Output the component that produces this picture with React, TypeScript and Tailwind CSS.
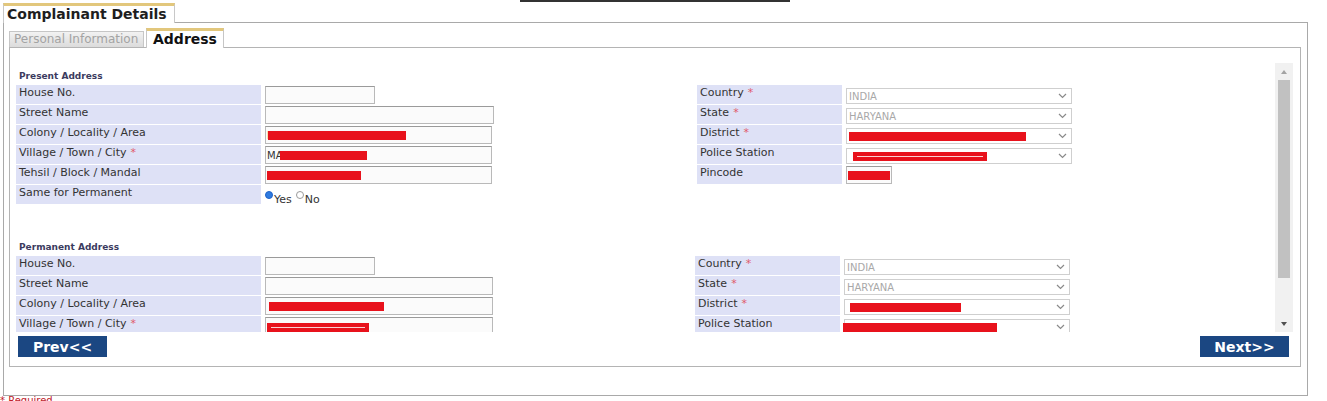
import type { ReactNode } from "react";

const font = "font-['DejaVu_Sans',sans-serif]";

function Req() {
  return <span className="ml-[4px] text-[#e05a6a]">*</span>;
}

function Redact({ w, ml = 0, line = false }: { w: number; ml?: number; line?: boolean }) {
  return (
    <div
      className="relative h-[9px] bg-[#e8121c]"
      style={{ width: w, marginLeft: ml }}
    >
      {line ? <div className="absolute left-[4px] right-[4px] top-[4px] h-px bg-white/80" /> : null}
    </div>
  );
}

function TextBox({ w, children }: { w: number; children?: ReactNode }) {
  return (
    <div
      className="flex h-[18px] items-center overflow-hidden border border-[#b9b9b9] border-t-[#9a9a9a] bg-[#fbfbfb] pl-[1px] text-[10px] text-[#333]"
      style={{ width: w }}
    >
      {children}
    </div>
  );
}

function Select({ value, children }: { value?: string; children?: ReactNode }) {
  return (
    <div className="flex h-[16px] w-[226px] items-center justify-between border border-[#cfcfcf] bg-white pl-[2px] pr-[4px] text-[10px] text-[#a8a8a8]">
      <div className="flex items-center">{value ?? children}</div>
      <svg width="9" height="6" viewBox="0 0 9 6" fill="none">
        <path d="M1 1l3.5 3.5L8 1" stroke="#8a8a8a" strokeWidth="1.2" />
      </svg>
    </div>
  );
}

function Row({ label, req, children, labelW }: { label: string; req?: boolean; children?: ReactNode; labelW: number }) {
  return (
    <div className="flex h-[20px]">
      <div
        className="h-[19px] shrink-0 bg-[#dee1f6] pl-[3px] pt-[1px] text-[11px] leading-[13px] text-[#333]"
        style={{ width: labelW }}
      >
        {label}
        {req ? <Req /> : null}
      </div>
      <div className="pl-[4px] pt-[1px]">{children}</div>
    </div>
  );
}

function Radio({ checked }: { checked?: boolean }) {
  return checked ? (
    <div className="mt-[2px] h-[8px] w-[8px] rounded-full border border-[#1f62c8] bg-[#2f7be0]" />
  ) : (
    <div className="mt-[2px] h-[8px] w-[8px] rounded-full border border-[#9a9a9a] bg-white" />
  );
}

function SectionTitle({ children }: { children: ReactNode }) {
  return <div className="ml-[5px] h-[13px] text-[9px] font-bold leading-[12px] text-[#3b3b5e]">{children}</div>;
}

export default function App() {
  return (
    <div className={`relative h-[401px] w-[1327px] overflow-hidden bg-white ${font}`}>
      <div className="ml-[520px] h-[2px] w-[270px] bg-[#333]" />

      {/* outer tab */}
      <div className="relative z-10 -mb-px mt-[1px] ml-[3px] flex h-[20px] w-[172px] border-x border-t-[3px] border-x-[#c8c8c8] border-t-[#e2c77c] bg-white pl-[3px] text-[14px] font-bold leading-[16px] text-[#1e1e1e]">
        Complainant Details
      </div>

      <div className="ml-[3px] h-[374px] w-[1305px] border border-[#a9a9a9]">
        {/* inner tabs */}
        <div className="ml-[5px] mt-[5px] flex items-end">
          <div className="h-[16px] w-[135px] border border-b-0 border-[#c6c6c6] bg-gradient-to-b from-[#f2f2f2] to-[#dcdcdc] pl-[4px] text-[12px] leading-[15px] text-[#a3a3a3]">
            Personal Information
          </div>
          <div className="relative z-10 -mb-px ml-[2px] h-[20px] w-[78px] border-x border-t-[3px] border-x-[#c6c6c6] border-t-[#e2c77c] bg-white pl-[6px] text-[14px] font-bold leading-[16px] text-[#111]">
            Address
          </div>
        </div>

        <div className="ml-[5px] h-[320px] w-[1292px] border border-[#b4b4b4]">
          {/* scroll area */}
          <div className="ml-[4px] mt-[15px] flex h-[269px] w-[1279px]">
            <div className="flex-1 overflow-hidden">
              <div className="h-[7px]" />
              <SectionTitle>Present Address</SectionTitle>
              <div className="ml-[2px] mt-[2px] flex">
                <div className="w-[681px]">
                  <Row label="House No." labelW={245}>
                    <TextBox w={110} />
                  </Row>
                  <Row label="Street Name" labelW={245}>
                    <TextBox w={229} />
                  </Row>
                  <Row label="Colony / Locality / Area" labelW={245}>
                    <TextBox w={227}>
                      <span>P</span>
                      <Redact w={138} ml={-5} />
                    </TextBox>
                  </Row>
                  <Row label="Village / Town / City" req labelW={245}>
                    <TextBox w={227}>
                      <span>MA</span>
                      <Redact w={87} ml={-2} />
                    </TextBox>
                  </Row>
                  <Row label="Tehsil / Block / Mandal" labelW={245}>
                    <TextBox w={227}>
                      <Redact w={94} />
                    </TextBox>
                  </Row>
                  <Row label="Same for Permanent" labelW={245}>
                    <div className="flex items-start pt-[3px] text-[11px] leading-[12px] text-[#333]">
                      <Radio checked />
                      <span className="ml-[1px] mt-[5px]">Yes</span>
                      <span className="ml-[4px]">
                        <Radio />
                      </span>
                      <span className="ml-[1px] mt-[5px]">No</span>
                    </div>
                  </Row>
                </div>
                <div>
                  <Row label="Country" req labelW={145}>
                    <div className="pt-[2px]">
                      <Select value="INDIA" />
                    </div>
                  </Row>
                  <Row label="State" req labelW={145}>
                    <div className="pt-[2px]">
                      <Select value="HARYANA" />
                    </div>
                  </Row>
                  <Row label="District" req labelW={145}>
                    <div className="pt-[2px]">
                      <Select>
                        <Redact w={177} />
                      </Select>
                    </div>
                  </Row>
                  <Row label="Police Station" labelW={145}>
                    <div className="pt-[2px]">
                      <Select>
                        <Redact w={134} ml={4} line />
                      </Select>
                    </div>
                  </Row>
                  <Row label="Pincode" labelW={145}>
                    <TextBox w={46}>
                      <Redact w={42} />
                    </TextBox>
                  </Row>
                </div>
              </div>

              <div className="h-[36px]" />
              <SectionTitle>Permanent Address</SectionTitle>
              <div className="ml-[2px] mt-[2px] flex">
                <div className="w-[679px]">
                  <Row label="House No." labelW={245}>
                    <TextBox w={110} />
                  </Row>
                  <Row label="Street Name" labelW={245}>
                    <TextBox w={228} />
                  </Row>
                  <Row label="Colony / Locality / Area" labelW={245}>
                    <TextBox w={228}>
                      <Redact w={115} ml={2} />
                    </TextBox>
                  </Row>
                  <Row label="Village / Town / City" req labelW={245}>
                    <TextBox w={228}>
                      <div className="mt-[3px]">
                        <Redact w={102} line />
                      </div>
                    </TextBox>
                  </Row>
                </div>
                <div>
                  <Row label="Country" req labelW={145}>
                    <div className="pt-[2px]">
                      <Select value="INDIA" />
                    </div>
                  </Row>
                  <Row label="State" req labelW={145}>
                    <div className="pt-[2px]">
                      <Select value="HARYANA" />
                    </div>
                  </Row>
                  <Row label="District" req labelW={145}>
                    <div className="pt-[2px]">
                      <Select>
                        <Redact w={111} ml={3} />
                      </Select>
                    </div>
                  </Row>
                  <Row label="Police Station" labelW={145}>
                    <div className="pt-[2px]">
                      <Select>
                        <Redact w={154} ml={-4} />
                      </Select>
                    </div>
                  </Row>
                </div>
              </div>
            </div>

            {/* scrollbar */}
            <div className="flex w-[18px] flex-col items-center bg-[#f1f1f1]">
              <div className="flex h-[17px] items-center justify-center">
                <svg width="6" height="4" viewBox="0 0 6 4">
                  <path d="M0 4L3 0l3 4z" fill="#a3a3a3" />
                </svg>
              </div>
              <div className="h-[198px] w-[12px] bg-[#c1c1c1]" />
              <div className="flex-1" />
              <div className="flex h-[17px] items-center justify-center">
                <svg width="6" height="4" viewBox="0 0 6 4">
                  <path d="M0 0h6L3 4z" fill="#505050" />
                </svg>
              </div>
            </div>
          </div>

          {/* nav buttons */}
          <div className="mt-[4px] flex justify-between pl-[8px] pr-[11px]">
            <button className="h-[21px] w-[89px] bg-[#1b4782] text-[14px] font-bold leading-[22px] text-white">
              Prev&lt;&lt;
            </button>
            <button className="h-[21px] w-[89px] bg-[#1b4782] text-[14px] font-bold leading-[22px] text-white">
              Next&gt;&gt;
            </button>
          </div>
        </div>
      </div>

      <div className="-mt-[1px] text-[10px] leading-[12px] text-[#c0202a]">* Required</div>
    </div>
  );
}
